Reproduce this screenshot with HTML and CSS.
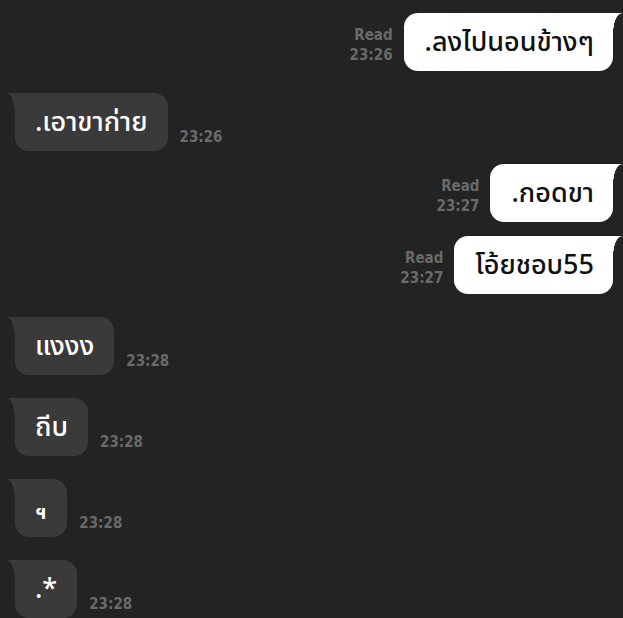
FILE: index.html
```html
<!DOCTYPE html>
<html lang="th">
<head>
<meta charset="utf-8">
<link rel="stylesheet" href="styles.css">
</head>
<body>
<div class="chat">
  <div class="row out r1">
    <div class="meta"><span>Read</span><span>23:26</span></div>
    <div class="bubble">.ลงไปนอนข้างๆ</div>
  </div>
  <div class="row in r2">
    <div class="bubble">.เอาขาก่าย</div>
    <div class="meta"><span>23:26</span></div>
  </div>
  <div class="row out r3">
    <div class="meta"><span>Read</span><span>23:27</span></div>
    <div class="bubble">.กอดขา</div>
  </div>
  <div class="row out r4">
    <div class="meta"><span>Read</span><span>23:27</span></div>
    <div class="bubble">โอ้ยชอบ55</div>
  </div>
  <div class="row in r5">
    <div class="bubble">แงงง</div>
    <div class="meta"><span>23:28</span></div>
  </div>
  <div class="row in r5">
    <div class="bubble">ถีบ</div>
    <div class="meta"><span>23:28</span></div>
  </div>
  <div class="row in r5">
    <div class="bubble tiny"><span class="glyph">ฯ</span></div>
    <div class="meta"><span>23:28</span></div>
  </div>
  <div class="row in r5">
    <div class="bubble">.*</div>
    <div class="meta"><span>23:28</span></div>
  </div>
</div>
</body>
</html>
```

FILE: styles.css
```css
html, body {
  margin: 0;
  padding: 0;
  background: #232323;
  height: 100%;
  overflow: hidden;
}

.chat {
  display: flex;
  flex-direction: column;
  padding: 13px 10px 0 15px;
}

.row {
  display: flex;
  align-items: flex-end;
}

.row.out {
  justify-content: flex-end;
  gap: 11px;
}

.row.in {
  justify-content: flex-start;
  gap: 12px;
}

.r2 { margin-top: 22px; }
.r3 { margin-top: 13px; }
.r4 { margin-top: 14px; }
.r5 { margin-top: 23px; }

.bubble {
  position: relative;
  height: 58px;
  display: flex;
  align-items: center;
  padding: 0 20px;
  font-family: "Noto Sans Thai", "Noto Sans", sans-serif;
  font-size: 27px;
  font-weight: 500;
  border-radius: 14px;
}

.out .bubble {
  background: #ffffff;
  color: #111111;
  border-top-right-radius: 0;
  padding: 0 19px 0 21px;
}

.in .bubble {
  background: #3a3a3a;
  color: #ffffff;
  border-top-left-radius: 0;
}

.in .bubble.tiny {
  padding: 0 21px;
}

.glyph {
  font-size: 19px;
  font-weight: bold;
  padding-top: 10px;
}

.in .bubble::before,
.out .bubble::before {
  content: "";
  position: absolute;
  top: 0;
  width: 8px;
  height: 20px;
}

.in .bubble::before {
  left: -8px;
  background: radial-gradient(ellipse 8px 20px at 0 100%, transparent 96%, #3a3a3a 100%);
}

.out .bubble::before {
  right: -9px;
  width: 9px;
  background: radial-gradient(ellipse 9px 20px at 100% 100%, transparent 96%, #ffffff 100%);
}

.meta {
  display: flex;
  flex-direction: column;
  font-family: "DejaVu Sans Condensed", "DejaVu Sans", sans-serif;
  font-weight: bold;
  font-size: 15px;
  line-height: 20px;
  color: #6a6a6a;
}

.out .meta {
  align-items: flex-end;
  margin-bottom: 6px;
}

.in .meta {
  margin-bottom: 4px;
}
```
